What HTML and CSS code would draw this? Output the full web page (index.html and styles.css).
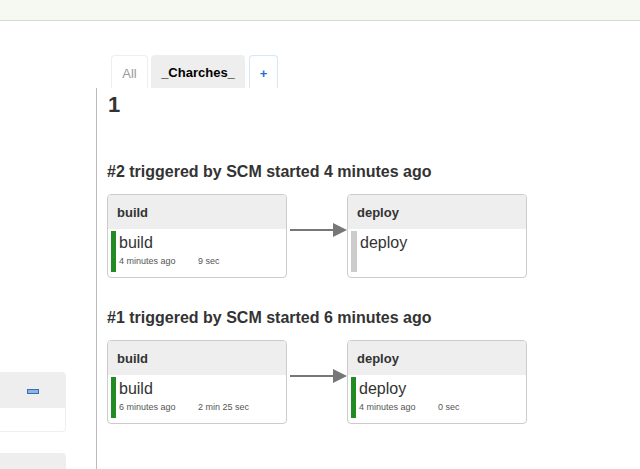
FILE: index.html
```html
<!DOCTYPE html>
<html>
<head>
<meta charset="utf-8">
<link rel="stylesheet" href="styles.css">
</head>
<body>
<header class="topbar"></header>
<div class="page">
  <aside class="side">
    <div class="side-box">
      <div class="side-head"><span class="mini-icon"></span></div>
    </div>
    <div class="side-box short">
      <div class="side-head"></div>
    </div>
  </aside>
  <main class="main">
    <nav class="tabs">
      <span class="tab tab-all">All</span>
      <span class="tab tab-active">_Charches_</span>
      <span class="tab tab-add">+</span>
    </nav>
    <section class="pane">
      <h2 class="view-title">1</h2>

      <div class="run">
        <h3 class="run-title">#2 triggered by SCM started 4 minutes ago</h3>
        <div class="stages">
          <div class="card">
            <div class="card-head">build</div>
            <div class="card-body">
              <span class="bar ok"></span>
              <div class="job">
                <div class="job-name">build</div>
                <div class="job-meta"><span class="ago">4 minutes ago</span><span>9 sec</span></div>
              </div>
            </div>
          </div>
          <svg class="arrow" width="60" height="16" viewBox="0 0 60 16"><line x1="3" y1="8" x2="48" y2="8" stroke="#777" stroke-width="2"/><polygon points="46,1 60,8 46,15" fill="#777"/></svg>
          <div class="card">
            <div class="card-head">deploy</div>
            <div class="card-body">
              <span class="bar idle"></span>
              <div class="job">
                <div class="job-name">deploy</div>
              </div>
            </div>
          </div>
        </div>
      </div>

      <div class="run">
        <h3 class="run-title">#1 triggered by SCM started 6 minutes ago</h3>
        <div class="stages">
          <div class="card">
            <div class="card-head">build</div>
            <div class="card-body">
              <span class="bar ok"></span>
              <div class="job">
                <div class="job-name">build</div>
                <div class="job-meta"><span class="ago">6 minutes ago</span><span>2 min 25 sec</span></div>
              </div>
            </div>
          </div>
          <svg class="arrow" width="60" height="16" viewBox="0 0 60 16"><line x1="3" y1="8" x2="48" y2="8" stroke="#777" stroke-width="2"/><polygon points="46,1 60,8 46,15" fill="#777"/></svg>
          <div class="card">
            <div class="card-head">deploy</div>
            <div class="card-body">
              <span class="bar ok"></span>
              <div class="job">
                <div class="job-name">deploy</div>
                <div class="job-meta"><span class="ago">4 minutes ago</span><span>0 sec</span></div>
              </div>
            </div>
          </div>
        </div>
      </div>
    </section>
  </main>
</div>
</body>
</html>
```
FILE: styles.css
```css
html, body {
  margin: 0;
  padding: 0;
  background: #fff;
  font-family: "Liberation Sans", Arial, sans-serif;
  color: #333;
  overflow: hidden;
}
.topbar {
  height: 20px;
  background: #f6f9f1;
  border-bottom: 1px solid #d6d9d0;
}
.page {
  display: flex;
  height: 448px;
}
.side {
  width: 66px;
  flex: none;
  display: flex;
  flex-direction: column;
  gap: 21px;
  padding-top: 351px;
  box-sizing: border-box;
  height: 448px;
}
.side-box {
  flex: none;
  height: 58px;
  border: 1px solid #eee;
  border-left: none;
  border-radius: 0 4px 4px 0;
  overflow: hidden;
}
.side-box.short {
  height: 15px;
  border-bottom: none;
  border-radius: 0 4px 0 0;
}
.side-head {
  height: 35px;
  background: #eee;
  display: flex;
  align-items: center;
  padding-left: 27px;
}
.mini-icon {
  width: 10px;
  height: 3px;
  background: #8db4e2;
  border: 1px solid #3d6cb3;
  margin-top: 1px;
}
.main {
  flex: 1;
  margin-left: 30px;
  padding-top: 34px;
  display: flex;
  flex-direction: column;
}
.tabs {
  display: flex;
  padding-left: 15px;
  height: 33px;
}
.tab {
  display: flex;
  align-items: center;
  justify-content: center;
  font-size: 13px;
  border-radius: 4px 4px 0 0;
  box-sizing: border-box;
  height: 33px;
  padding-top: 2px;
}
.tab-all {
  width: 37px;
  color: #999;
  border: 1px solid #eee;
  border-bottom: none;
}
.tab-active {
  width: 94px;
  margin-left: 3px;
  background: #eee;
  color: #000;
  font-weight: bold;
}
.tab-add {
  width: 29px;
  margin-left: 4px;
  color: #1f6fd6;
  font-weight: bold;
  border: 1px solid #d8e6f5;
  border-bottom: none;
}
.pane {
  flex: 1;
  border-left: 1px solid #bbb;
  padding-left: 11px;
  padding-top: 4px;
}
.view-title {
  margin: 0;
  font-size: 22px;
  line-height: 26px;
  font-weight: bold;
  color: #333;
}
.run {
  margin-top: 44px;
}
.run + .run {
  margin-top: 30px;
}
.run-title {
  margin: 0 0 12px -1px;
  font-size: 16px;
  line-height: 20px;
  font-weight: bold;
  color: #333;
}
.stages {
  display: flex;
  align-items: flex-start;
  margin-left: -1px;
}
.arrow {
  margin-top: 28px;
  flex: none;
}
.card {
  width: 178px;
  border: 1px solid #ccc;
  border-radius: 4px;
  overflow: hidden;
  flex: none;
}
.card-head {
  height: 34px;
  background: #eee;
  font-size: 13px;
  font-weight: bold;
  color: #333;
  display: flex;
  align-items: center;
  padding-left: 9px;
}
.card-body {
  display: flex;
  padding: 2px 3px 5px 3px;
}
.bar {
  width: 5px;
  height: 41px;
  flex: none;
}
.bar.ok {
  background: #228b22;
}
.bar.idle {
  background: #ccc;
  width: 6px;
}
.job {
  margin-left: 3px;
  padding-top: 2px;
}
.job-name {
  font-size: 16px;
  line-height: 19px;
  color: #333;
}
.job-meta {
  font-size: 9px;
  line-height: 12px;
  color: #555;
  margin-top: 3px;
}
.ago {
  display: inline-block;
  width: 79px;
}
```
